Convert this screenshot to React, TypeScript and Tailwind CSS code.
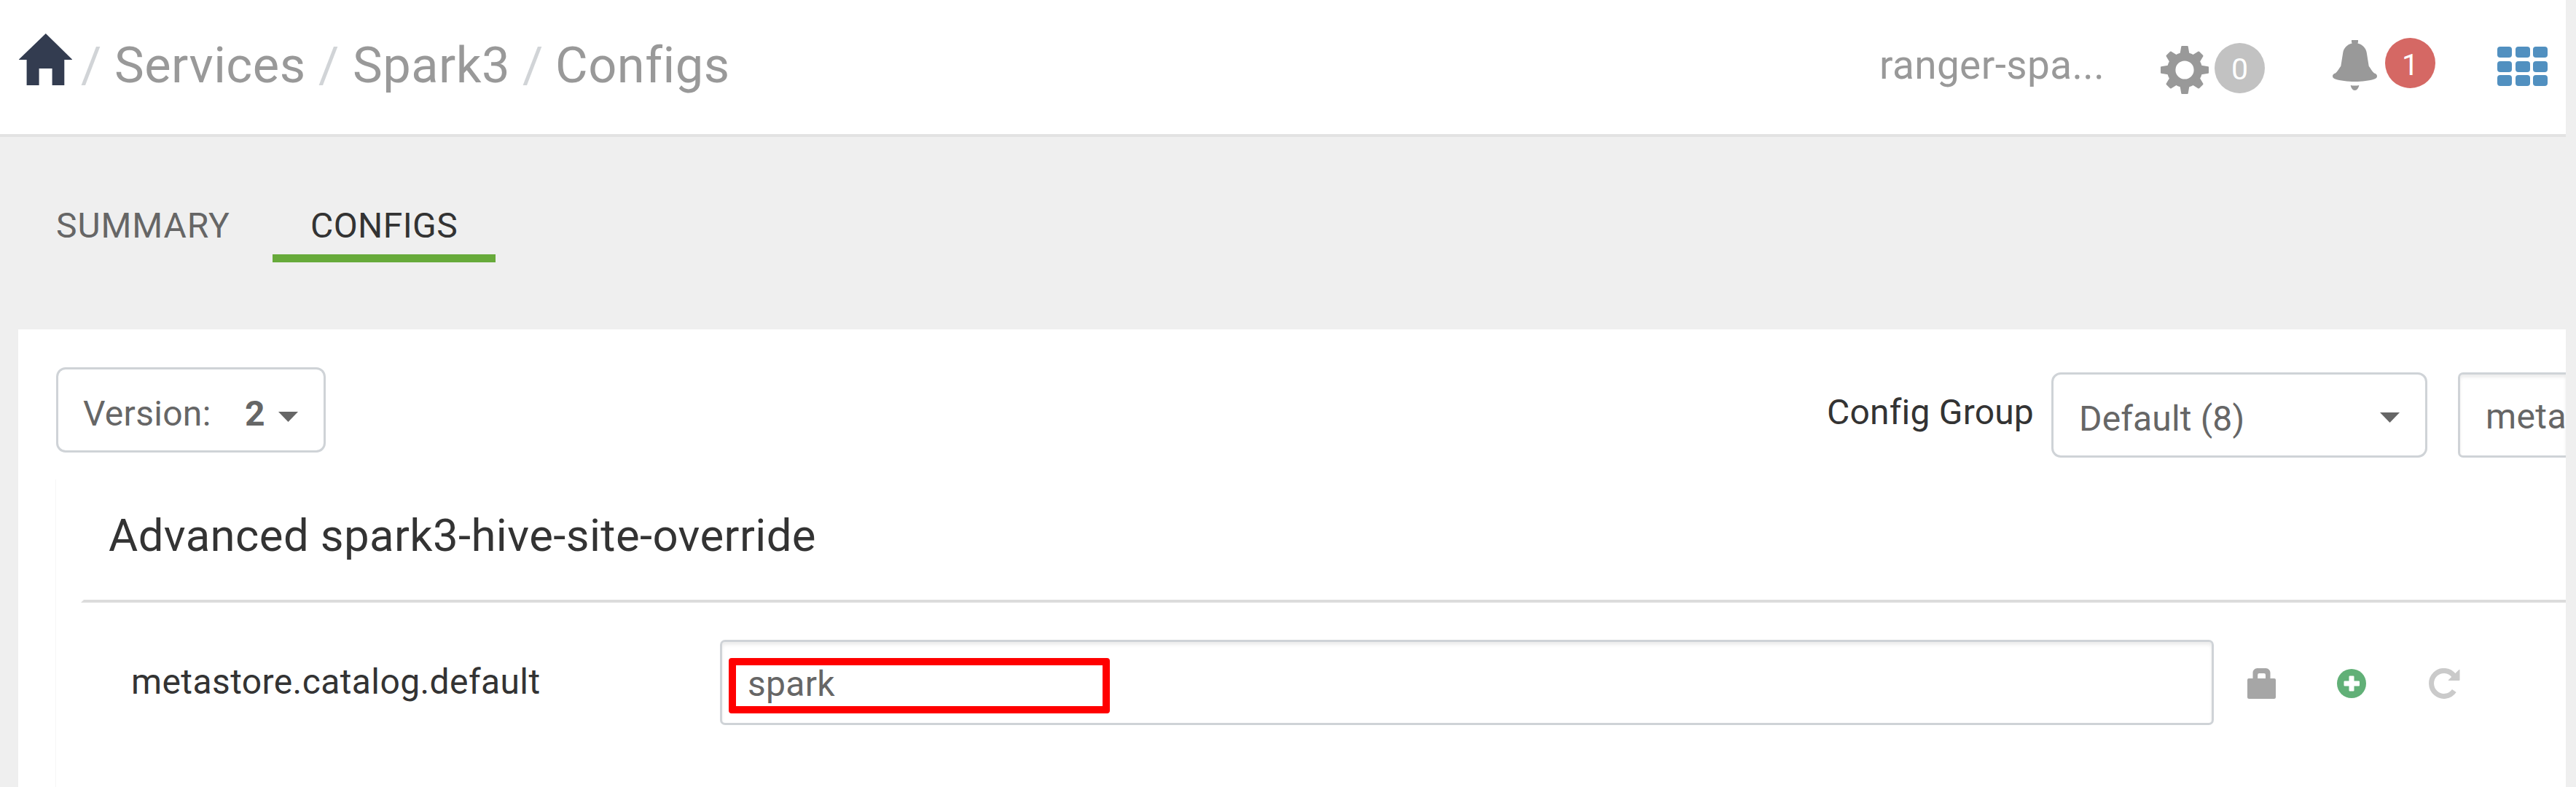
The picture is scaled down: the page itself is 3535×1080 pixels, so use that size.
import type { ReactNode } from 'react';

function HomeIcon() {
  return (
    <svg className="mt-[46px] ml-[26px] h-[71px] w-[73px] shrink-0" viewBox="0 0 73 71" fill="#333c50">
      <path d="M36.8 0 73 35.5V36H62.3V71H45.6V48H27.6V71H10.6V36H0V35.5Z" />
    </svg>
  );
}

function GearIcon() {
  const straight = [0, 90, 180, 270];
  const diagonal = [45, 135, 225, 315];
  return (
    <svg className="mt-[63px] h-[66px] w-[66px] shrink-0" viewBox="-33 -33 66 66" fill="#999999">
      <path fillRule="evenodd" d="M0-24.2A24.2 24.2 0 1 1 0 24.2A24.2 24.2 0 1 1 0-24.2ZM0-12.6A12.6 12.6 0 1 0 0 12.6A12.6 12.6 0 1 0 0-12.6Z" />
      {straight.map((a) => (
        <path key={a} transform={`rotate(${a})`} d="M-8-20 -6.3-23 -4.7-32.2Q-4.5-33-3.7-33H3.7Q4.5-33 4.7-32.2L6.3-23 8-20Z" />
      ))}
      {diagonal.map((a) => (
        <path key={a} transform={`rotate(${a})`} d="M-8-20 -6.8-23 -4.7-31.2Q-4.4-32-3.4-32H3.4Q4.4-32 4.7-31.2L6.8-23 8-20Z" />
      ))}
    </svg>
  );
}

function BellIcon() {
  return (
    <svg className="mt-[55px] ml-[93px] h-[69px] w-[61px] shrink-0" viewBox="0 0 61 69" fill="#999999">
      <path d="M26 0H35V2.5L34.4 4.5C41.5 6.2 45.6 11.2 46.7 17L49.7 35.7C52.2 39 54.2 43 57.2 45.6C59.5 46 61 47.6 61 49.6C61 51.6 60 52.6 58 53.3C50.5 55.8 40.5 57 30.5 57C20.5 57 10.5 55.8 3 53.3C1 52.6 0 51.6 0 49.6C0 47.6 1.5 46 3.8 45.6C6.8 43 8.8 39 11.3 35.7L14.3 17C15.4 11.2 19.5 6.2 26.6 4.5L26 2.5Z" />
      <path d="M24.7 62C28 62.8 33 62.8 36.3 62C35.8 65.5 33.5 69 30.5 69C27.5 69 25.2 65.5 24.7 62Z" />
    </svg>
  );
}

function GridIcon() {
  return (
    <div className="mt-[64px] ml-[85px] grid h-[54px] w-[69px] shrink-0 grid-cols-3 grid-rows-3 gap-x-[4.5px] gap-y-[4.5px]">
      {Array.from({ length: 9 }, (_, i) => (
        <span key={i} className="rounded-[4px] bg-[#5190c0]" />
      ))}
    </div>
  );
}

function LockIcon() {
  return (
    <svg className="mt-[39px] ml-[46px] h-[42px] w-[39px] shrink-0" viewBox="0 0 39 42" fill="#a6a6a6">
      <path fillRule="evenodd" d="M7.5 14V6C7.5 3 10.5 0 13.5 0H25.5C28.5 0 31.5 3 31.5 6V14H37Q39 14 39 16V39.5Q39 42 36.5 42H2.5Q0 42 0 39.5V16Q0 14 2 14ZM14.2 14H25V9Q25 7 23 7H16.2Q14.2 7 14.2 9Z" />
    </svg>
  );
}

function PlusIcon() {
  return (
    <svg className="mt-[40px] ml-[84px] h-[40px] w-[40px] shrink-0" viewBox="0 0 40 40">
      <circle cx="20" cy="20" r="20" fill="#61b077" />
      <path d="M17.5 9.5H22.5Q23.5 9.5 23.5 10.5V16.5H30Q31 16.5 31 17.5V22.5Q31 23.5 30 23.5H23.5V29.5Q23.5 30.5 22.5 30.5H17.5Q16.5 30.5 16.5 29.5V23.5H10.5Q9.5 23.5 9.5 22.5V17.5Q9.5 16.5 10.5 16.5H16.5V10.5Q16.5 9.5 17.5 9.5Z" fill="#fff" />
    </svg>
  );
}

function RedoIcon() {
  return (
    <svg className="mt-[39px] ml-[86px] h-[42px] w-[43px] shrink-0" viewBox="0 0 43 42" fill="none">
      <path d="M34.8 31A17.2 17.5 0 1 1 34.2 10" stroke="#cacaca" strokeWidth="7" />
      <path d="M41.5 2Q42.5 1.2 42.5 2.5V16Q42.5 17 41.5 17H27.5Q26 17 27 16Z" fill="#cacaca" />
    </svg>
  );
}

function Caret({ className }: { className: string }) {
  return (
    <svg className={className} viewBox="0 0 27 14" fill="#666666">
      <path d="M0 0H27L13.5 14Z" />
    </svg>
  );
}

function Slash({ className }: { className: string }) {
  return <span className={`shrink-0 text-[#d1d4d7] ${className}`}>/</span>;
}

function Badge({ className, children }: { className: string; children: ReactNode }) {
  return (
    <span className={`flex h-[69px] w-[69px] shrink-0 justify-center rounded-full text-[41px] text-white ${className}`}>
      {children}
    </span>
  );
}

function Header() {
  return (
    <header className="flex h-[188px] items-start border-b-4 border-[#e2e2e2] bg-white">
      <HomeIcon />
      <nav className="ml-[12px] mt-[50px] flex text-[68.6px] leading-[80px] tracking-[0.5px] text-[#999999]">
        <Slash className="w-[46px]" />
        <a className="w-[280px]">Services</a>
        <Slash className="w-[47px]" />
        <a className="w-[233px]">Spark3</a>
        <Slash className="w-[45px]" />
        <a>Configs</a>
      </nav>
      <div className="ml-auto flex shrink-0 items-start pr-[25px]">
        <span className="mt-[54px] w-[386px] text-[54.9px] leading-[70px] tracking-[0.4px] text-[#999999]">ranger-spa...</span>
        <GearIcon />
        <Badge className="mt-[59px] ml-[8px] bg-[#c2c2c2] leading-[73px]">0</Badge>
        <BellIcon />
        <Badge className="mt-[52px] ml-[11px] bg-[#d56864] leading-[74px]">1</Badge>
        <GridIcon />
      </div>
    </header>
  );
}

function Tabs() {
  return (
    <div className="flex h-[264px] items-start pt-[78px] text-[48px] leading-[64px] tracking-[0.4px]">
      <a className="ml-[77px] h-[94px] w-[297px] pt-[12px] tracking-[0.9px] text-[#666666]">SUMMARY</a>
      <a className="h-[94px] w-[306px] border-b-[11px] border-[#67aa3a] pt-[12px] pl-[52px] text-[#333333]">CONFIGS</a>
    </div>
  );
}

function Toolbar() {
  return (
    <div className="flex h-[206px] items-start text-[48px] leading-[60px] tracking-[0.4px] text-[#666666]">
      <button className="mt-[52px] ml-[52px] flex h-[117px] w-[370px] shrink-0 items-start rounded-[13px] border-[3px] border-[#cfd3d7] pl-[34px] text-left">
        <span className="mt-[31px] w-[222px] tracking-[0.3px]">Version:</span>
        <b className="mt-[31px] w-[46px] font-bold">2</b>
        <Caret className="mt-[58px] h-[14px] w-[27px]" />
      </button>
      <label className="mt-[84px] ml-auto w-[308px] shrink-0 tracking-[0.2px] text-[#333333]">Config Group</label>
      <button className="mt-[59px] flex h-[117px] w-[516px] shrink-0 items-start justify-between rounded-[13px] border-[3px] border-[#cfd3d7] pr-[35px] pl-[35px] text-left">
        <span className="mt-[31px] tracking-[0.15px]">Default (8)</span>
        <Caret className="mt-[52px] h-[14px] w-[27px]" />
      </button>
      <div className="mt-[59px] ml-[42px] h-[117px] w-[148px] shrink-0 overflow-hidden rounded-l-[7px] border-[3px] border-r-0 border-[#cfd3d7] pt-[28px] pl-[35px] shadow-[inset_0_4px_4px_rgba(0,0,0,0.075)]">
        meta
      </div>
    </div>
  );
}

function PropertyRow() {
  return (
    <div className="flex items-start pt-[51px] text-[48px] leading-[60px] tracking-[0.4px]">
      <label className="mt-[28px] ml-[69px] w-[808px] shrink-0 text-[#333333]">metastore.catalog.default</label>
      <div className="relative h-[117px] w-[2050px] shrink-0 rounded-[7px] border-[3px] border-[#cfd3d7] pt-[28px] pl-[35px] text-[#666666] shadow-[inset_0_4px_4px_rgba(0,0,0,0.075)]">
        <span className="tracking-[0.3px]">spark</span>
        <div className="absolute top-[22px] left-[9px] h-[76px] w-[523px] rounded-[4px] border-[10px] border-[#ff0000]" />
      </div>
      <LockIcon />
      <PlusIcon />
      <RedoIcon />
    </div>
  );
}

export default function App() {
  return (
    <div className="h-[1080px] w-[3535px] overflow-hidden bg-[#efefef] pr-[14px] font-['Roboto',sans-serif]">
      <Header />
      <Tabs />
      <main className="ml-[25px] h-[628px] bg-white">
        <Toolbar />
        <section className="ml-[51px] h-[422px] border-l border-[#f6f6f6] pl-[34px]">
          <h2 className="h-[165px] pt-[37px] pl-[38px] text-[61.7px] leading-[80px] tracking-[0.4px] text-[#333333]">
            Advanced spark3-hive-site-override
          </h2>
          <div className="border-b-4 border-l-4 border-b-[#dcdcdc] border-l-transparent" />
          <PropertyRow />
        </section>
      </main>
    </div>
  );
}
